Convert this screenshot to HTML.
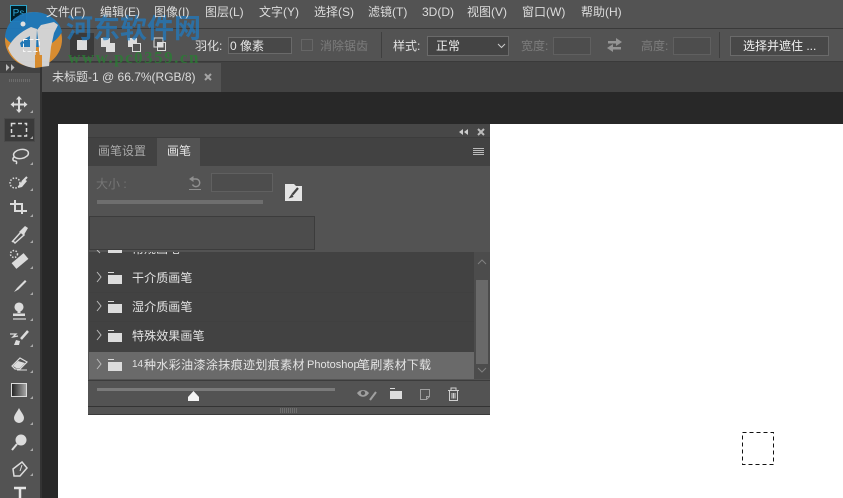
<!DOCTYPE html>
<html><head><meta charset="utf-8">
<style>
*{margin:0;padding:0;box-sizing:border-box}
html,body{width:843px;height:498px;overflow:hidden;background:#282828}
body{position:relative;font-family:"Liberation Sans","Noto Sans CJK SC",sans-serif;font-size:12px;color:#e0e0e0}
.a{position:absolute}
.t{position:absolute;white-space:nowrap;line-height:16px;height:16px}
.m{top:4px;color:#dcdcdc}
.d{color:#7d7d7d}
.b{position:absolute;border:1px solid #6a6a6a;background:#484848}
.row{position:absolute;left:132px;white-space:nowrap;line-height:16px;color:#e4e4e4}
</style></head><body>
<!-- menu -->
<div class="a" style="left:0;top:0;width:843px;height:28px;background:#535353"></div>
<div class="a" style="left:0;top:28px;width:843px;height:1px;background:#3a3a3a"></div>
<div class="a" style="left:0;top:29px;width:843px;height:32px;background:#535353"></div>
<div class="a" style="left:0;top:61px;width:843px;height:1px;background:#3a3a3a"></div>
<div class="a" style="left:0;top:62px;width:843px;height:30px;background:#424242"></div>
<div class="a" style="left:42px;top:63px;width:179px;height:29px;background:#535353"></div>
<div class="a" style="left:0;top:92px;width:843px;height:406px;background:#282828"></div>
<div class="a" style="left:58px;top:124px;width:785px;height:374px;background:#fff"></div>
<!-- PS logo -->
<div class="a" style="left:10px;top:5px;width:17px;height:17px;background:#001d26;border:1px solid #2fa3c9;color:#31a8d8;font-size:10px;line-height:15px;text-align:center">Ps</div>
<!-- options -->
<div class="a" style="left:70px;top:33px;width:24px;height:24px;background:#3a3a3a"></div>
<svg class="a" style="left:0;top:29px" width="190" height="32">
<rect x="77" y="11" width="10" height="10" fill="#ddd"/>
<rect x="101" y="9" width="9" height="9" fill="#ddd"/><rect x="106" y="14" width="9" height="9" fill="#ddd"/>
<rect x="128" y="9" width="9" height="9" fill="#ddd"/><rect x="132.500" y="14.500" width="8" height="8" fill="#535353" stroke="#ddd"/>
<rect x="154" y="9" width="9" height="9" fill="none" stroke="#ddd"/><rect x="157" y="13" width="6" height="5" fill="#ddd"/><rect x="157.500" y="13.500" width="8" height="8" fill="none" stroke="#ddd"/>
</svg>
<span class="t" style="left:195px;top:38px">羽化:</span>
<div class="b" style="left:228px;top:37px;width:64px;height:17px"></div>
<span class="t" style="left:230px;top:38px;color:#e8e8e8">0 像素</span>
<div class="a" style="left:301px;top:39px;width:12px;height:12px;border:1px solid #666"></div>
<span class="t d" style="left:320px;top:38px">消除锯齿</span>
<div class="a" style="left:381px;top:32px;width:1px;height:26px;background:#3f3f3f"></div>
<span class="t" style="left:393px;top:38px">样式:</span>
<div class="b" style="left:427px;top:36px;width:82px;height:20px;background:#444"></div>
<span class="t" style="left:436px;top:38px;color:#eee">正常</span>
<svg class="a" style="left:497px;top:43px" width="9" height="6"><path d="M1 1l3.500 3.500L8 1" fill="none" stroke="#ccc"/></svg>
<span class="t d" style="left:521px;top:38px">宽度:</span>
<div class="b" style="left:553px;top:37px;width:38px;height:18px;background:#4d4d4d;border-color:#606060"></div>
<svg class="a" style="left:606px;top:37px" width="17" height="15" fill="#949494"><path d="M2 4h8V1l6 4-6 4V6.500H2z"/><path d="M15 10H7V7L1 11l6 4v-2.500h8z"/></svg>
<span class="t d" style="left:641px;top:38px">高度:</span>
<div class="b" style="left:673px;top:37px;width:38px;height:18px;background:#4d4d4d;border-color:#606060"></div>
<div class="a" style="left:719px;top:32px;width:1px;height:26px;background:#3f3f3f"></div>
<div class="b" style="left:730px;top:36px;width:99px;height:20px;background:#484848"></div>
<span class="t" style="left:743px;top:38px;color:#f0f0f0">选择并遮住 ...</span>
<!-- tab -->
<span class="t" style="left:52px;top:69px;color:#dcdcdc">未标题-1 @ 66.7%(RGB/8)</span>
<svg class="a" style="left:204px;top:73px" width="8" height="8"><path d="M1 1l6 6M7 1L1 7" stroke="#a4a4a4" stroke-width="2"/></svg>
<!-- toolbar -->
<div class="a" style="left:0;top:62px;width:40px;height:436px;background:#535353"></div>
<div class="a" style="left:40px;top:62px;width:2px;height:436px;background:#333"></div>
<div class="a" style="left:0;top:62px;width:40px;height:11px;background:#424242"></div>
<div class="a" style="left:9px;top:79px;width:21px;height:3px;background:repeating-linear-gradient(90deg,#6c6c6c 0 1px,#535353 1px 2px)"></div>
<svg class="a" style="left:6px;top:64px" width="9" height="7" fill="#bbb"><path d="M0 0l3.500 3.500L0 7zM5 0l3.500 3.500L5 7z"/></svg>
<div class="a" style="left:4px;top:118px;width:31px;height:24px;background:#3a3a3a;border:1px solid #4a4a4a"></div>
<svg class="a" style="left:0;top:0" width="40" height="498">
<g fill="none" stroke="#dcdcdc" stroke-width="1.500">
<path d="M19 98v13M12 104.500h14" stroke-width="2"/><path d="M19 96l-3 3.500h6zM19 113l-3-3.500h6zM10.500 104.500l3.500-3v6zM27.500 104.500l-3.500-3v6z" fill="#dcdcdc" stroke="none"/>
<rect x="11.500" y="123.500" width="15" height="12.500" stroke-dasharray="4 2.500"/>
<ellipse cx="21" cy="154" rx="7.500" ry="4.500" transform="rotate(-10 21 154)"/><path d="M14 157c-2 2-1 4 1 4s2 2 1 3"/>
<circle cx="15" cy="183" r="5" stroke-dasharray="1.500 1.500"/><path d="M27 177l-5 5" stroke-width="2"/><path d="M24 179l-5 6-1 3 4-1 5-6z" fill="#dcdcdc" stroke="none"/>
<path d="M15 200v11h12M10 204h12v10" stroke-width="2"/>
<path d="M13 241l-1 1 0 0 9-10 3 3-9 8z"/><path d="M21 230l4-4 3 2-3 5 -1 2-5-3z" fill="#dcdcdc" stroke="none"/>
<path d="M14 266l12-10" stroke-width="7.500"/><circle cx="14" cy="254" r="3.500" stroke-dasharray="1.500 1.500"/>
<path d="M14 292l3-4 8-8 1.500 1.500-8 8z" fill="#dcdcdc" stroke="none"/>
<circle cx="19" cy="307" r="3.800" fill="#dcdcdc"/><path d="M19 310v3" stroke-width="3"/><path d="M13 313.500h12v2.500H13z" fill="#dcdcdc" stroke="none"/><path d="M13 319h13" stroke-width="1.200"/>
<path d="M10 334h6l-3 3 5-1" stroke-width="1.300"/><path d="M28 331l-7 8" stroke-width="2.500"/><path d="M14 345l2-5 4 1-1 4z" fill="#dcdcdc" stroke="none"/>
<path d="M12 366l8-8 7 4-7 7h-5z" stroke-width="1.200"/><path d="M18 361l7 2-5 5h-4l-3-2z" fill="#dcdcdc" stroke="none"/><path d="M17 370h10" stroke-width="1"/>
</g>
<defs><linearGradient id="g"><stop offset="0" stop-color="#222"/><stop offset="1" stop-color="#aaa"/></linearGradient></defs>
<rect x="11.500" y="383.500" width="15" height="13" fill="url(#g)" stroke="#dcdcdc"/>
<path d="M19 408c-2 4-5 7-5 10a5 5 0 0010 0c0-3-3-6-5-10z" fill="#dcdcdc"/>
<circle cx="21" cy="440" r="5.500" fill="#dcdcdc"/><path d="M17 444l-5 6" stroke="#dcdcdc" stroke-width="2"/>
<path d="M22 462l5 6-7 8h-6l-1-7z" fill="none" stroke="#dcdcdc" stroke-width="1.500"/><path d="M22 465l-2 6" stroke="#dcdcdc"/>
<path d="M14 488h12M20 488v10" stroke="#e4e4e4" stroke-width="2.500" fill="none"/>
<g fill="#a8a8a8"><path d="M33 113v-3l-3 3zM33 139v-3l-3 3zM33 165v-3l-3 3zM33 191v-3l-3 3zM33 217v-3l-3 3zM33 243v-3l-3 3zM33 269v-3l-3 3zM33 295v-3l-3 3zM33 321v-3l-3 3zM33 347v-3l-3 3zM33 373v-3l-3 3zM33 399v-3l-3 3zM33 425v-3l-3 3zM33 451v-3l-3 3zM33 476v-3l-3 3z"/></g>
</svg>
<!-- panel -->
<div class="a" style="left:88px;top:124px;width:402px;height:291px;background:#535353;overflow:hidden">
<div class="a" style="left:0;top:0;width:402px;height:13px;background:#474747"></div>
<div class="a" style="left:0;top:13px;width:402px;height:1px;background:#3c3c3c"></div>
<div class="a" style="left:0;top:14px;width:402px;height:28px;background:#424242"></div>
<div class="a" style="left:69px;top:14px;width:43px;height:28px;background:#535353"></div>
</div>
<svg class="a" style="left:458px;top:128px" width="28" height="8"><path d="M5 1L1 4l4 3zM10 1L6 4l4 3z" fill="#ccc"/><path d="M20 1l6 6M26 1l-6 6" stroke="#bbb" stroke-width="2"/></svg>
<span class="t" style="left:98px;top:143px;color:#a8a8a8">画笔设置</span>
<span class="t" style="left:167px;top:143px;color:#e4e4e4">画笔</span>
<svg class="a" style="left:473px;top:148px" width="11" height="8" stroke="#bbb"><path d="M0 .5h11M0 2.500h11M0 4.500h11M0 6.500h11"/></svg>
<span class="t" style="left:96px;top:176px;color:#767676">大小 :</span>
<svg class="a" style="left:187px;top:176px" width="16" height="15" fill="none" stroke="#8f8f8f" stroke-width="1.500"><path d="M6 3h3a3.800 3.800 0 11-3.500 5.500"/><path d="M6.500 0L2 3l4.500 3z" fill="#8f8f8f" stroke="none"/><path d="M2 13.500h12" stroke-width="1"/></svg>
<div class="a" style="left:211px;top:173px;width:62px;height:19px;border:1px solid #606060;background:#4d4d4d"></div>
<div class="a" style="left:97px;top:200px;width:166px;height:4px;background:#6e6e6e"></div>
<svg class="a" style="left:285px;top:184px" width="17" height="17"><path d="M0 0h9l2 2h6v15H0z" fill="#e4e4e4"/><path d="M13 4L7.500 10.500" stroke="#444" stroke-width="2.200"/><path d="M7 9.500l-3.500 5 5-1.500z" fill="#444"/></svg>
<!-- list -->
<div class="a" style="left:89px;top:252px;width:385px;height:127px;background:#424242;overflow:hidden">
<span class="row" style="left:43px;top:-11px">常规画笔</span>
</div>
<div class="a" style="left:89px;top:216px;width:226px;height:34px;background:#4c4c4c;border:1px solid #3c3c3c"></div>
<div class="a" style="left:89px;top:352px;width:385px;height:27px;background:#6a6a6a"></div>
<div class="a" style="left:89px;top:292px;width:385px;height:1px;background:#404040"></div>
<div class="a" style="left:89px;top:321px;width:385px;height:1px;background:#404040"></div>
<svg class="a" style="left:89px;top:250px" width="50" height="130">
<g fill="none" stroke="#bbb"><path d="M8 0l3 3M8 22l4 5-4 5M8 51l4 5-4 5M8 80l4 5-4 5M8 109l4 5-4 5"/></g>
<g fill="#dcdcdc"><rect x="19" y="0" width="14" height="3"/>
<path d="M19 22h6v1h-6zM19 25h14v9H19z"/><path d="M19 51h6v1h-6zM19 54h14v9H19z"/><path d="M19 80h6v1h-6zM19 83h14v9H19z"/><path d="M19 109h6v1h-6zM19 112h14v9H19z"/></g>
</svg>
<span class="row" style="top:270px;letter-spacing:.1px">干介质画笔</span>
<span class="row" style="top:299px;letter-spacing:.1px">湿介质画笔</span>
<span class="row" style="top:328px;letter-spacing:.1px">特殊效果画笔</span>
<span class="row" style="top:357px;font-size:10px;left:132px">14</span>
<span class="row" style="top:357px;left:144px;letter-spacing:.38px">种水彩油漆涂抹痕迹划痕素材</span>
<span class="row" style="top:357px;left:307px;font-size:11px">Photoshop</span>
<span class="row" style="top:357px;left:358px;letter-spacing:.2px">笔刷素材下载</span>
<!-- scrollbar -->
<div class="a" style="left:474px;top:252px;width:16px;height:127px;background:#4c4c4c"></div>
<div class="a" style="left:476px;top:280px;width:12px;height:84px;background:#696969"></div>
<svg class="a" style="left:477px;top:258px" width="10" height="116" fill="none" stroke="#808080"><path d="M1 6l4-4 4 4M1 110l4 4 4-4"/></svg>
<!-- bottom -->
<div class="a" style="left:88px;top:380px;width:402px;height:1px;background:#3c3c3c"></div>
<div class="a" style="left:97px;top:388px;width:238px;height:3px;background:#7a7a7a"></div>
<svg class="a" style="left:187px;top:391px" width="13" height="11"><path d="M6.500 0L12 6v4H1V6z" fill="#f4f4f4"/></svg>
<svg class="a" style="left:355px;top:386px" width="110" height="16">
<path d="M2 7c3-4 9-4 12 0-3 5-9 5-12 0z" fill="#a0a0a0"/><circle cx="8" cy="7" r="2.200" fill="#535353"/><path d="M21 6l-6 8" stroke="#a0a0a0" stroke-width="2"/>
<path d="M35 2h5v1h-5zM35 5h12v8H35z" fill="#dcdcdc"/>
<path d="M65.500 3.500h9v7l-3 3h-6z M71.500 13.500v-3h3" fill="none" stroke="#a0a0a0"/>
<path d="M93 4.500h11M96 4V2h5v2M94.500 5v9.500h8V5M97 7v5.500M98.500 7v5.500M100 7v5.500" fill="none" stroke="#d0d0d0"/>
</svg>
<div class="a" style="left:88px;top:406px;width:402px;height:1px;background:#333"></div>
<div class="a" style="left:280px;top:408px;width:18px;height:5px;background:repeating-linear-gradient(90deg,#6e6e6e 0 1px,#535353 1px 2px)"></div>
<div class="a" style="left:88px;top:414px;width:402px;height:1px;background:#3a3a3a"></div>
<!-- dashed -->
<svg class="a" style="left:742px;top:432px" width="32" height="33"><rect x=".5" y=".5" width="31" height="32" fill="none" stroke="#111" stroke-dasharray="4 3"/></svg>
<!-- watermark -->
<svg class="a" style="left:4px;top:11px;opacity:.95" width="60" height="58">
<ellipse cx="29.500" cy="28.500" rx="28.500" ry="27.500" fill="#e0902f"/>
<path d="M1 26C2 11 14 1 30 1c14 0 26 9 28 20-6 10-14 14-20 15H20C12 36 5 32 1 26z" fill="#1f79bb"/>
<path d="M4 37C8 28 16 21 27 16l6 2-2 39c-13-1-23-9-27-20z" fill="#d9d9d9"/>
<path d="M16 32c3-3 6-5 10-7v11h-9z" fill="#1f79bb"/>
<path d="M33 19l4-5 13-3 4 3-4 8-3 14-2 19-8 1z" fill="#d9d9d9"/>
<path d="M31 44h7v12l-7 1z" fill="#e0902f"/>
<circle cx="19" cy="13" r="2.500" fill="#e8e8e8"/>
<rect x="19.500" y="28.500" width="16" height="12" fill="none" stroke="#fff" stroke-dasharray="4 2"/>
</svg>
<div class="t" style="left:66px;top:14px;height:30px;line-height:30px;font-size:27px;font-weight:bold;color:#1f7cc4;opacity:.72">河东软件网</div>
<div class="t" style="left:68px;top:50px;height:16px;line-height:16px;font-size:17px;font-weight:bold;letter-spacing:1.5px;font-family:'Liberation Serif','Noto Serif CJK SC',serif;color:#2a7d34;opacity:.8">www.pc0359.cn</div>
<!-- menu text above watermark -->
<span class="t m" style="left:46px">文件(F)</span>
<span class="t m" style="left:100px">编辑(E)</span>
<span class="t m" style="left:154px">图像(I)</span>
<span class="t m" style="left:205px">图层(L)</span>
<span class="t m" style="left:259px">文字(Y)</span>
<span class="t m" style="left:314px">选择(S)</span>
<span class="t m" style="left:368px">滤镜(T)</span>
<span class="t m" style="left:422px">3D(D)</span>
<span class="t m" style="left:467px">视图(V)</span>
<span class="t m" style="left:522px">窗口(W)</span>
<span class="t m" style="left:581px">帮助(H)</span>
</body></html>
